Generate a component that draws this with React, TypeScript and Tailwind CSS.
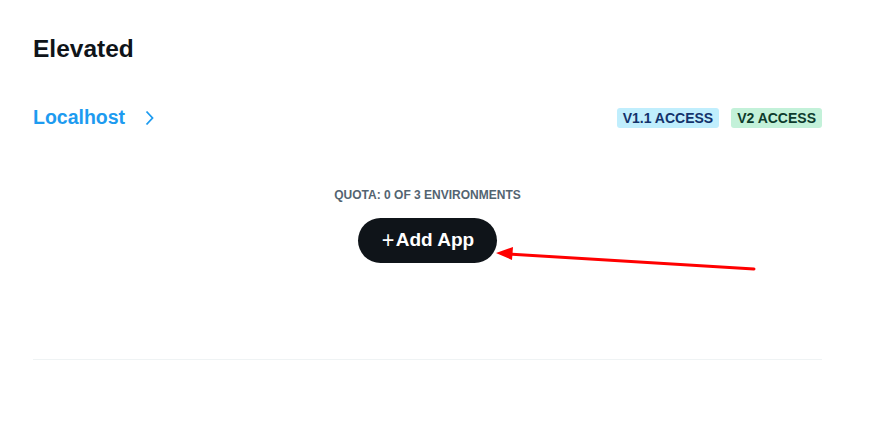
export default function App() {
  return (
    <div className="relative w-[885px] h-[421px] bg-white overflow-hidden font-['Liberation_Sans',Arial,sans-serif]">
      <div className="ml-[33px] w-[789px] pt-[35px]">
        <h2 className="text-[24.5px] leading-[28px] font-bold text-[#0f1419]">Elevated</h2>

        {/* environment row */}
        <div className="mt-[39px] flex items-center justify-between h-[32px]">
          <div className="flex items-center gap-[20px] text-[#1d9bf0]">
            <span className="text-[19.5px] font-bold">Localhost</span>
            <svg width="9" height="16" viewBox="0 0 9 16" fill="none" stroke="currentColor" strokeWidth="1.8">
              <path d="M1.5 1.5 L7.5 8 L1.5 14.5" />
            </svg>
          </div>
          <div className="flex items-center gap-[12px]">
            <span className="h-[20px] px-[6px] rounded-[3px] bg-[#c0eefd] text-[#13326b] text-[14px] font-bold leading-[20px]">
              V1.1 ACCESS
            </span>
            <span className="h-[20px] px-[6px] rounded-[3px] bg-[#c3f1d9] text-[#0d3b2c] text-[14px] font-bold leading-[20px]">
              V2 ACCESS
            </span>
          </div>
        </div>

        {/* quota + add */}
        <div className="mt-[53px] flex flex-col items-center">
          <p className="text-[12px] font-bold text-[#536471] uppercase leading-[16px]">Quota: 0 of 3 environments</p>
          <button className="mt-[15px] h-[45px] px-[23px] rounded-full bg-[#0f1419] text-white text-[19px] font-bold flex items-center">
            <span className="font-light text-[24px] leading-none mr-[1px] -mt-[2px] scale-x-90">+</span>Add App
          </button>
        </div>

        <div className="mt-[96px] border-t border-[#eff3f4]" />
      </div>

      {/* annotation arrow */}
      <svg className="absolute left-0 top-0 pointer-events-none" width="885" height="421">
        <line x1="754" y1="269" x2="508" y2="254" stroke="#ff0000" strokeWidth="3" strokeLinecap="round" />
        <polygon points="496,253 513,247 512,260" fill="#ff0000" />
      </svg>
    </div>
  );
}
